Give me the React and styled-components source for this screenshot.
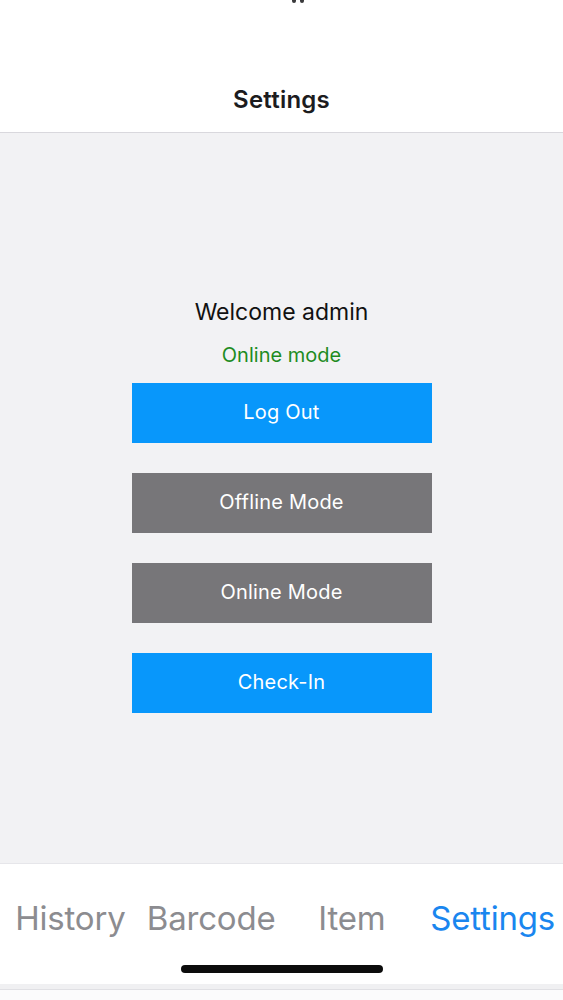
import React from "react";
import styled, { createGlobalStyle } from "styled-components";

const Global = createGlobalStyle`
  html, body { margin: 0; padding: 0; background: #ffffff; }
  body { font-family: "Inter", "Liberation Sans", "Noto Sans", sans-serif; }
  * { box-sizing: border-box; }
`;

const Screen = styled.div`
  width: 563px;
  height: 1000px;
  display: flex;
  flex-direction: column;
  background: #ffffff;
  overflow: hidden;
`;

const Header = styled.header`
  height: 133px;
  flex: none;
  display: flex;
  flex-direction: column;
  align-items: center;
  background: #ffffff;
  border-bottom: 1px solid #d9d8dd;
`;

const StatusFragment = styled.div`
  height: 4px;
  display: flex;
  gap: 4px;
  margin-left: 32px;
`;

const Dot = styled.span`
  width: 4px;
  height: 3px;
  background: #3a3a3c;
  border-radius: 0 0 2px 2px;
`;

const Title = styled.h1`
  margin: 81px 0 0;
  font-size: 24px;
  font-weight: 600;
  color: #1c1c1e;
  letter-spacing: 0.2px;
`;

const Body = styled.main`
  flex: 1;
  background: #f2f2f4;
  display: flex;
  flex-direction: column;
  align-items: center;
  padding-top: 164px;
`;

const Welcome = styled.div`
  font-size: 23px;
  color: #111111;
  line-height: 30px;
`;

const Status = styled.div`
  margin-top: 16px;
  font-size: 20px;
  color: #1e8c1f;
  line-height: 24px;
`;

const ButtonList = styled.div`
  margin-top: 16px;
  display: flex;
  flex-direction: column;
  gap: 30px;
`;

const ActionButton = styled.button`
  width: 300px;
  height: 60px;
  border: none;
  border-radius: 0;
  background: ${(p) => (p.$tone === "gray" ? "#777679" : "#0897fb")};
  color: #ffffff;
  font-family: inherit;
  font-size: 20px;
  letter-spacing: 0.2px;
  display: flex;
  align-items: center;
  justify-content: center;
  padding: 0 0 3px;
  cursor: pointer;
`;

const TabBar = styled.nav`
  height: 121px;
  flex: none;
  background: #ffffff;
  border-top: 1px solid #e6e6ea;
  display: flex;
  flex-direction: column;
`;

const Tabs = styled.div`
  display: grid;
  grid-template-columns: repeat(4, 1fr);
  padding-top: 34px;
`;

const Tab = styled.div`
  text-align: center;
  font-size: 33px;
  line-height: 40px;
  color: ${(p) => (p.$active ? "#1a86ef" : "#8c8c90")};
  white-space: nowrap;
  letter-spacing: -0.2px;
`;

const HomeIndicator = styled.div`
  width: 202px;
  height: 8px;
  border-radius: 4px;
  background: #0c0c0c;
  margin: 27px auto 0;
`;

const BottomStrip = styled.div`
  height: 16px;
  flex: none;
  background: #fbfbfc;
  border-top: 5px solid #f0f0f2;
  box-shadow: inset 0 1px 0 #e0e0e4;
`;

export default function App() {
  return (
    <>
      <Global />
      <Screen>
        <Header>
          <StatusFragment>
            <Dot />
            <Dot />
          </StatusFragment>
          <Title>Settings</Title>
        </Header>
        <Body>
          <Welcome>Welcome admin</Welcome>
          <Status>Online mode</Status>
          <ButtonList>
            <ActionButton>Log Out</ActionButton>
            <ActionButton $tone="gray">Offline Mode</ActionButton>
            <ActionButton $tone="gray">Online Mode</ActionButton>
            <ActionButton>Check-In</ActionButton>
          </ButtonList>
        </Body>
        <TabBar>
          <Tabs>
            <Tab>History</Tab>
            <Tab>Barcode</Tab>
            <Tab>Item</Tab>
            <Tab $active>Settings</Tab>
          </Tabs>
          <HomeIndicator />
        </TabBar>
        <BottomStrip />
      </Screen>
    </>
  );
}
